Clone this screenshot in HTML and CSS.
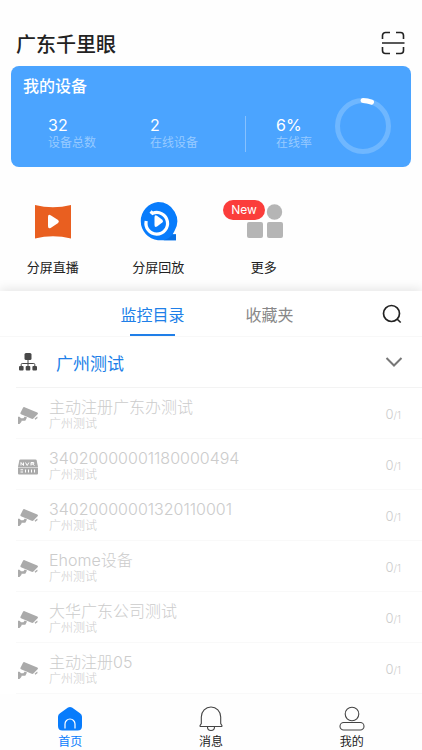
FILE: index.html
```html
<!DOCTYPE html>
<html lang="zh-CN">
<head>
  <meta charset="UTF-8">
  <meta name="viewport" content="width=device-width, initial-scale=1.0">
  <title>广东千里眼</title>
  <link rel="stylesheet" href="styles.css">
</head>
<body>

<!-- Shared icons -->
<svg class="sprite" aria-hidden="true">
  <symbol id="camera" viewBox="0 0 20 18">
    <path d="M5 .8 Q5.500 -.2 6.600 .2 L19.300 5.600 Q20.500 6.200 19.600 7.200 L15.400 11.500 Q14.700 12.200 13.700 11.800 L3 7.300 Q2 6.700 2.500 5.700z"/>
    <path d="M16.600 11.800l2.600-2.400.4 1.600-2.200 1.700z"/>
    <path d="M0 9.800h1.500l1.500 1.500h2.400l1.400-1.800 2.200.9-1.400 2.800q-.3.600-1 .6H3.500v1L1.500 17H0z"/>
  </symbol>
</svg>

<header class="header">
  <h1>广东千里眼</h1>
  <button class="icon-btn" aria-label="扫一扫">
    <svg width="24" height="24" viewBox="0 0 24 24" fill="none" stroke="#222" stroke-width="1.6">
      <path d="M1.5 8V4.5a3 3 0 0 1 3-3H9M15 1.5h4.500a3 3 0 0 1 3 3V8M22.500 16v3.500a3 3 0 0 1-3 3H15M9 22.500H4.500a3 3 0 0 1-3-3V16M1 12h22.500"/>
    </svg>
  </button>
</header>

<!-- Device summary -->
<section class="summary">
  <h2>我的设备</h2>
  <div class="stats">
    <div class="stat"><strong>32</strong><span>设备总数</span></div>
    <div class="stat"><strong>2</strong><span>在线设备</span></div>
    <div class="stat rate"><strong>6%</strong><span>在线率</span></div>
    <svg class="ring" width="56" height="56" viewBox="0 0 56 56" fill="none" stroke-width="5">
      <circle cx="28" cy="28" r="25.500" stroke="#6fb7ff"/>
      <path d="M28 2.500a25.500 25.500 0 0 1 8.500 1.600" stroke="#fff" stroke-linecap="round"/>
    </svg>
  </div>
</section>

<!-- Shortcuts -->
<div class="shortcuts">
  <button>
    <svg width="40" height="42" viewBox="0 0 40 42">
      <path fill="#e95f20" d="M2 5q18 4.500 36 0v33.500q-18-4.500-36 0z"/>
      <path fill="#fff" d="M15 17q0-3 2.600-1.800l7.500 4.900q1.600 1.400 0 2.800l-7.500 5Q15 29 15 26z"/>
    </svg>
    <span>分屏直播</span>
  </button>
  <button>
    <svg width="40" height="42" viewBox="0 0 40 42">
      <path fill="#087cfc" d="M20 2a19.200 19.200 0 0 1 16.500 29q-.7 1.600-1.800 3.200H38v6H20A19.200 19.200 0 0 1 20 2z"/>
      <path fill="#076fe2" d="M38 34.600h-3.500q-3 4-9 5.600H38z"/>
      <path fill="none" stroke="#fff" stroke-width="3.200" d="M12.500 11.500l2.200 1.800A10.800 10.800 0 1 1 8.200 21"/>
      <path fill="#fff" d="M16.500 17.500q0-3.200 2.500-1.700l5.300 4q1.500 1.400 0 2.800l-5.300 4q-2.500 1.300-2.500-1.700z"/>
    </svg>
    <span>分屏回放</span>
  </button>
  <button class="more">
    <svg width="40" height="42" viewBox="0 0 40 42" fill="#b5b5b5">
      <circle cx="30.500" cy="12" r="7.700"/>
      <rect x="3" y="22" width="16" height="16" rx="2"/>
      <rect x="23" y="22" width="16" height="16" rx="2"/>
    </svg>
    <span>更多</span>
    <em class="badge">New</em>
  </button>
</div>

<!-- Directory -->
<main class="directory">
  <div class="tabs">
    <button class="tab active">监控目录</button>
    <button class="tab">收藏夹</button>
    <button class="icon-btn search" aria-label="搜索">
      <svg width="20" height="20" viewBox="0 0 20 20" fill="none" stroke="#222" stroke-width="1.700">
        <circle cx="9.500" cy="9.500" r="8"/>
        <path d="M15 15l3.700 3.500"/>
      </svg>
    </button>
  </div>

  <button class="group">
    <svg width="18" height="18" viewBox="0 0 18 18" fill="#484848">
      <rect x="5.500" y="0" width="7" height="7" rx="1.500"/>
      <path fill="none" stroke="#484848" d="M9 6v8M2.200 14v-2.500q0-1 1-1h11.600q1 0 1 1V14"/>
      <rect x="0" y="13" width="4.600" height="4.600" rx="1"/>
      <rect x="6.700" y="13" width="4.600" height="4.600" rx="1"/>
      <rect x="13.400" y="13" width="4.600" height="4.600" rx="1"/>
    </svg>
    <span>广州测试</span>
    <svg width="18" height="12" viewBox="0 0 18 12" fill="none" stroke="#777" stroke-width="2">
      <path d="M1.500 2L9 9.500 16.500 2"/>
    </svg>
  </button>

  <ul class="devices">
    <li>
      <svg class="device-icon"><use href="#camera"/></svg>
      <div class="device"><b>主动注册广东办测试</b><small>广州测试</small></div>
      <span class="count">0<small>/1</small></span>
    </li>
    <li>
      <svg class="device-icon" viewBox="0 0 20 18">
        <path d="M2.500 1.500h15q1 0 1.200 1L20 9H0l1.300-6.500q.2-1 1.200-1z"/>
        <path d="M0 9.500h20v6q0 1-1 1H1q-1 0-1-1z"/>
        <path fill="none" stroke="#fff" d="M3 7.500v-3l2.500 3v-3M7.500 4.500l1.700 3 1.700-3M13 7.500v-3h2.700v1.500H13M14.500 6l2 1.500"/>
        <path fill="none" stroke="#fff" d="M7.500 11.500v3M10.500 11.500v3M13.500 11.500v3M16.500 11.500v3M2.500 11.800h2.500M2.500 14h2.500"/>
      </svg>
      <div class="device"><b>34020000001180000494</b><small>广州测试</small></div>
      <span class="count">0<small>/1</small></span>
    </li>
    <li>
      <svg class="device-icon"><use href="#camera"/></svg>
      <div class="device"><b>34020000001320110001</b><small>广州测试</small></div>
      <span class="count">0<small>/1</small></span>
    </li>
    <li>
      <svg class="device-icon"><use href="#camera"/></svg>
      <div class="device"><b>Ehome设备</b><small>广州测试</small></div>
      <span class="count">0<small>/1</small></span>
    </li>
    <li>
      <svg class="device-icon"><use href="#camera"/></svg>
      <div class="device"><b>大华广东公司测试</b><small>广州测试</small></div>
      <span class="count">0<small>/1</small></span>
    </li>
    <li>
      <svg class="device-icon"><use href="#camera"/></svg>
      <div class="device"><b>主动注册05</b><small>广州测试</small></div>
      <span class="count">0<small>/1</small></span>
    </li>
  </ul>
</main>

<nav class="tabbar">
  <a href="#home" class="active">
    <svg width="26" height="26" viewBox="0 0 26 26">
      <path fill="#087cfc" d="M11 1.600q2-1.400 4 0l8 5.600q2 1.400 2 3.600V20q0 4.500-4.500 4.500h-15Q1 24.500 1 20v-9.200Q1 8.600 3 7.200z"/>
      <path fill="none" stroke="#fff" stroke-width="1.200" d="M8 22.500v-4.500a5 5 0 0 1 10 0v4.500"/>
    </svg>
    <span>首页</span>
  </a>
  <a href="#messages">
    <svg width="26" height="26" viewBox="0 0 26 26" fill="none" stroke="#444" stroke-width="1.100">
      <path d="M3.300 17.500V11a9.700 10 0 0 1 19.400 0v6.500l1.200 2q.4 1-.6 1H2.700q-1 0-.6-1zM9.500 21a3.500 3.500 0 0 0 7 0"/>
    </svg>
    <span>消息</span>
  </a>
  <a href="#mine">
    <svg width="26" height="26" viewBox="0 0 26 26" fill="none" stroke="#444" stroke-width="1.100">
      <circle cx="13" cy="8" r="6.800"/>
      <rect x="1" y="16.500" width="24" height="7.500" rx="3.700"/>
    </svg>
    <span>我的</span>
  </a>
</nav>

</body>
</html>
```
FILE: styles.css
```css
* {
  box-sizing: border-box;
}
body {
  margin: 0;
  padding-top: 20px;
  min-height: 100vh;
  display: flex;
  flex-direction: column;
  font-family: Inter, "Noto Sans CJK SC", sans-serif;
  background: #fefefe;
  color: #222;
}
h1, h2, ul {
  margin: 0;
  padding: 0;
}
button {
  padding: 0;
  border: none;
  background: none;
  font: inherit;
  color: inherit;
  cursor: pointer;
}
svg {
  display: block;
  flex-shrink: 0;
}
.sprite {
  position: absolute;
  width: 0;
  height: 0;
}
.header {
  display: flex;
  justify-content: space-between;
  align-items: center;
  height: 46px;
  padding: 0 17px 0 16px;
}
.header h1 {
  font-size: 20px;
  font-weight: 500;
}
.summary {
  height: 101px;
  margin: 0 11px;
  padding: 8px 20px 0 12px;
  border-radius: 8px;
  background: #4ba4ff;
  color: #fff;
}
.summary h2 {
  font-size: 16px;
  line-height: 24px;
  font-weight: 500;
}
.stats {
  display: flex;
  align-items: center;
  padding-left: 25px;
}
.stat {
  display: flex;
  flex-direction: column;
  flex-shrink: 0;
  width: 102px;
  padding-top: 16px;
}
.stat strong {
  font-size: 16px;
  line-height: 18px;
  font-weight: 400;
}
.stat span {
  font-size: 12px;
  line-height: 18px;
  color: #97caff;
}
.stat.rate {
  width: 84px;
  margin-left: -7px;
  margin-top: 16px;
  padding: 0 0 0 30px;
  border-left: 1px solid #86c1ff;
}
.ring {
  margin-left: auto;
}
.shortcuts {
  display: grid;
  grid-template-columns: repeat(4, 1fr);
  padding: 33px 0 14px;
}
.shortcuts button {
  position: relative;
  display: flex;
  flex-direction: column;
  align-items: center;
  gap: 15px;
  font-size: 13px;
  line-height: 20px;
}
.badge {
  position: absolute;
  top: 0;
  left: 12px;
  width: 42px;
  border-radius: 10px;
  background: #fb3d3b;
  color: #fff;
  font-size: 12px;
  font-style: normal;
}
.directory {
  flex: 1;
  background: #fff;
  box-shadow: 0 -2px 10px rgba(0, 0, 0, 0.1);
}
.tabs {
  display: grid;
  grid-template-columns: 94px 1fr 1fr 94px;
  height: 46px;
  border-bottom: 1px solid #f8f8f8;
}
.tab {
  position: relative;
  font-size: 16px;
  color: #888;
}
.tab:first-child {
  grid-column: 2;
}
.tab.active {
  color: #207fe8;
}
.tab.active::after {
  content: "";
  position: absolute;
  left: 50%;
  bottom: 0;
  width: 45px;
  height: 2px;
  margin-left: -23px;
  background: #207fe8;
}
.search {
  justify-self: end;
  padding-right: 20px;
}
.group {
  display: flex;
  align-items: center;
  width: 100%;
  height: 50px;
  padding: 0 19px;
}
.group span {
  flex: 1;
  padding-left: 19px;
  text-align: left;
  font-size: 17px;
  color: #207fe8;
}
.devices {
  margin-left: 16px;
  list-style: none;
  border-top: 1px solid #f3f3f3;
}
.devices li {
  display: flex;
  align-items: center;
  height: 51px;
  padding: 1px 21px 0 2px;
  border-bottom: 1px solid #f9f9f9;
  color: #ccc;
}
.device-icon {
  width: 20px;
  height: 18px;
  margin-top: 4px;
  fill: #aaa;
}
.device {
  flex: 1;
  display: flex;
  flex-direction: column;
  padding-left: 11px;
}
.device b {
  font-size: 16px;
  line-height: 20px;
  font-weight: 300;
}
.device small {
  font-size: 12px;
  line-height: 14px;
  font-weight: 300;
}
.count {
  font-size: 13px;
  font-weight: 300;
}
.count small {
  font-size: 10px;
}
.tabbar {
  display: grid;
  grid-template-columns: repeat(3, 1fr);
  height: 56px;
  padding-top: 12px;
  background: #fefefe;
}
.tabbar a {
  display: flex;
  flex-direction: column;
  align-items: center;
  font-size: 12px;
  line-height: 20px;
  color: #222;
  text-decoration: none;
}
.tabbar a.active {
  color: #087cfc;
}
```
